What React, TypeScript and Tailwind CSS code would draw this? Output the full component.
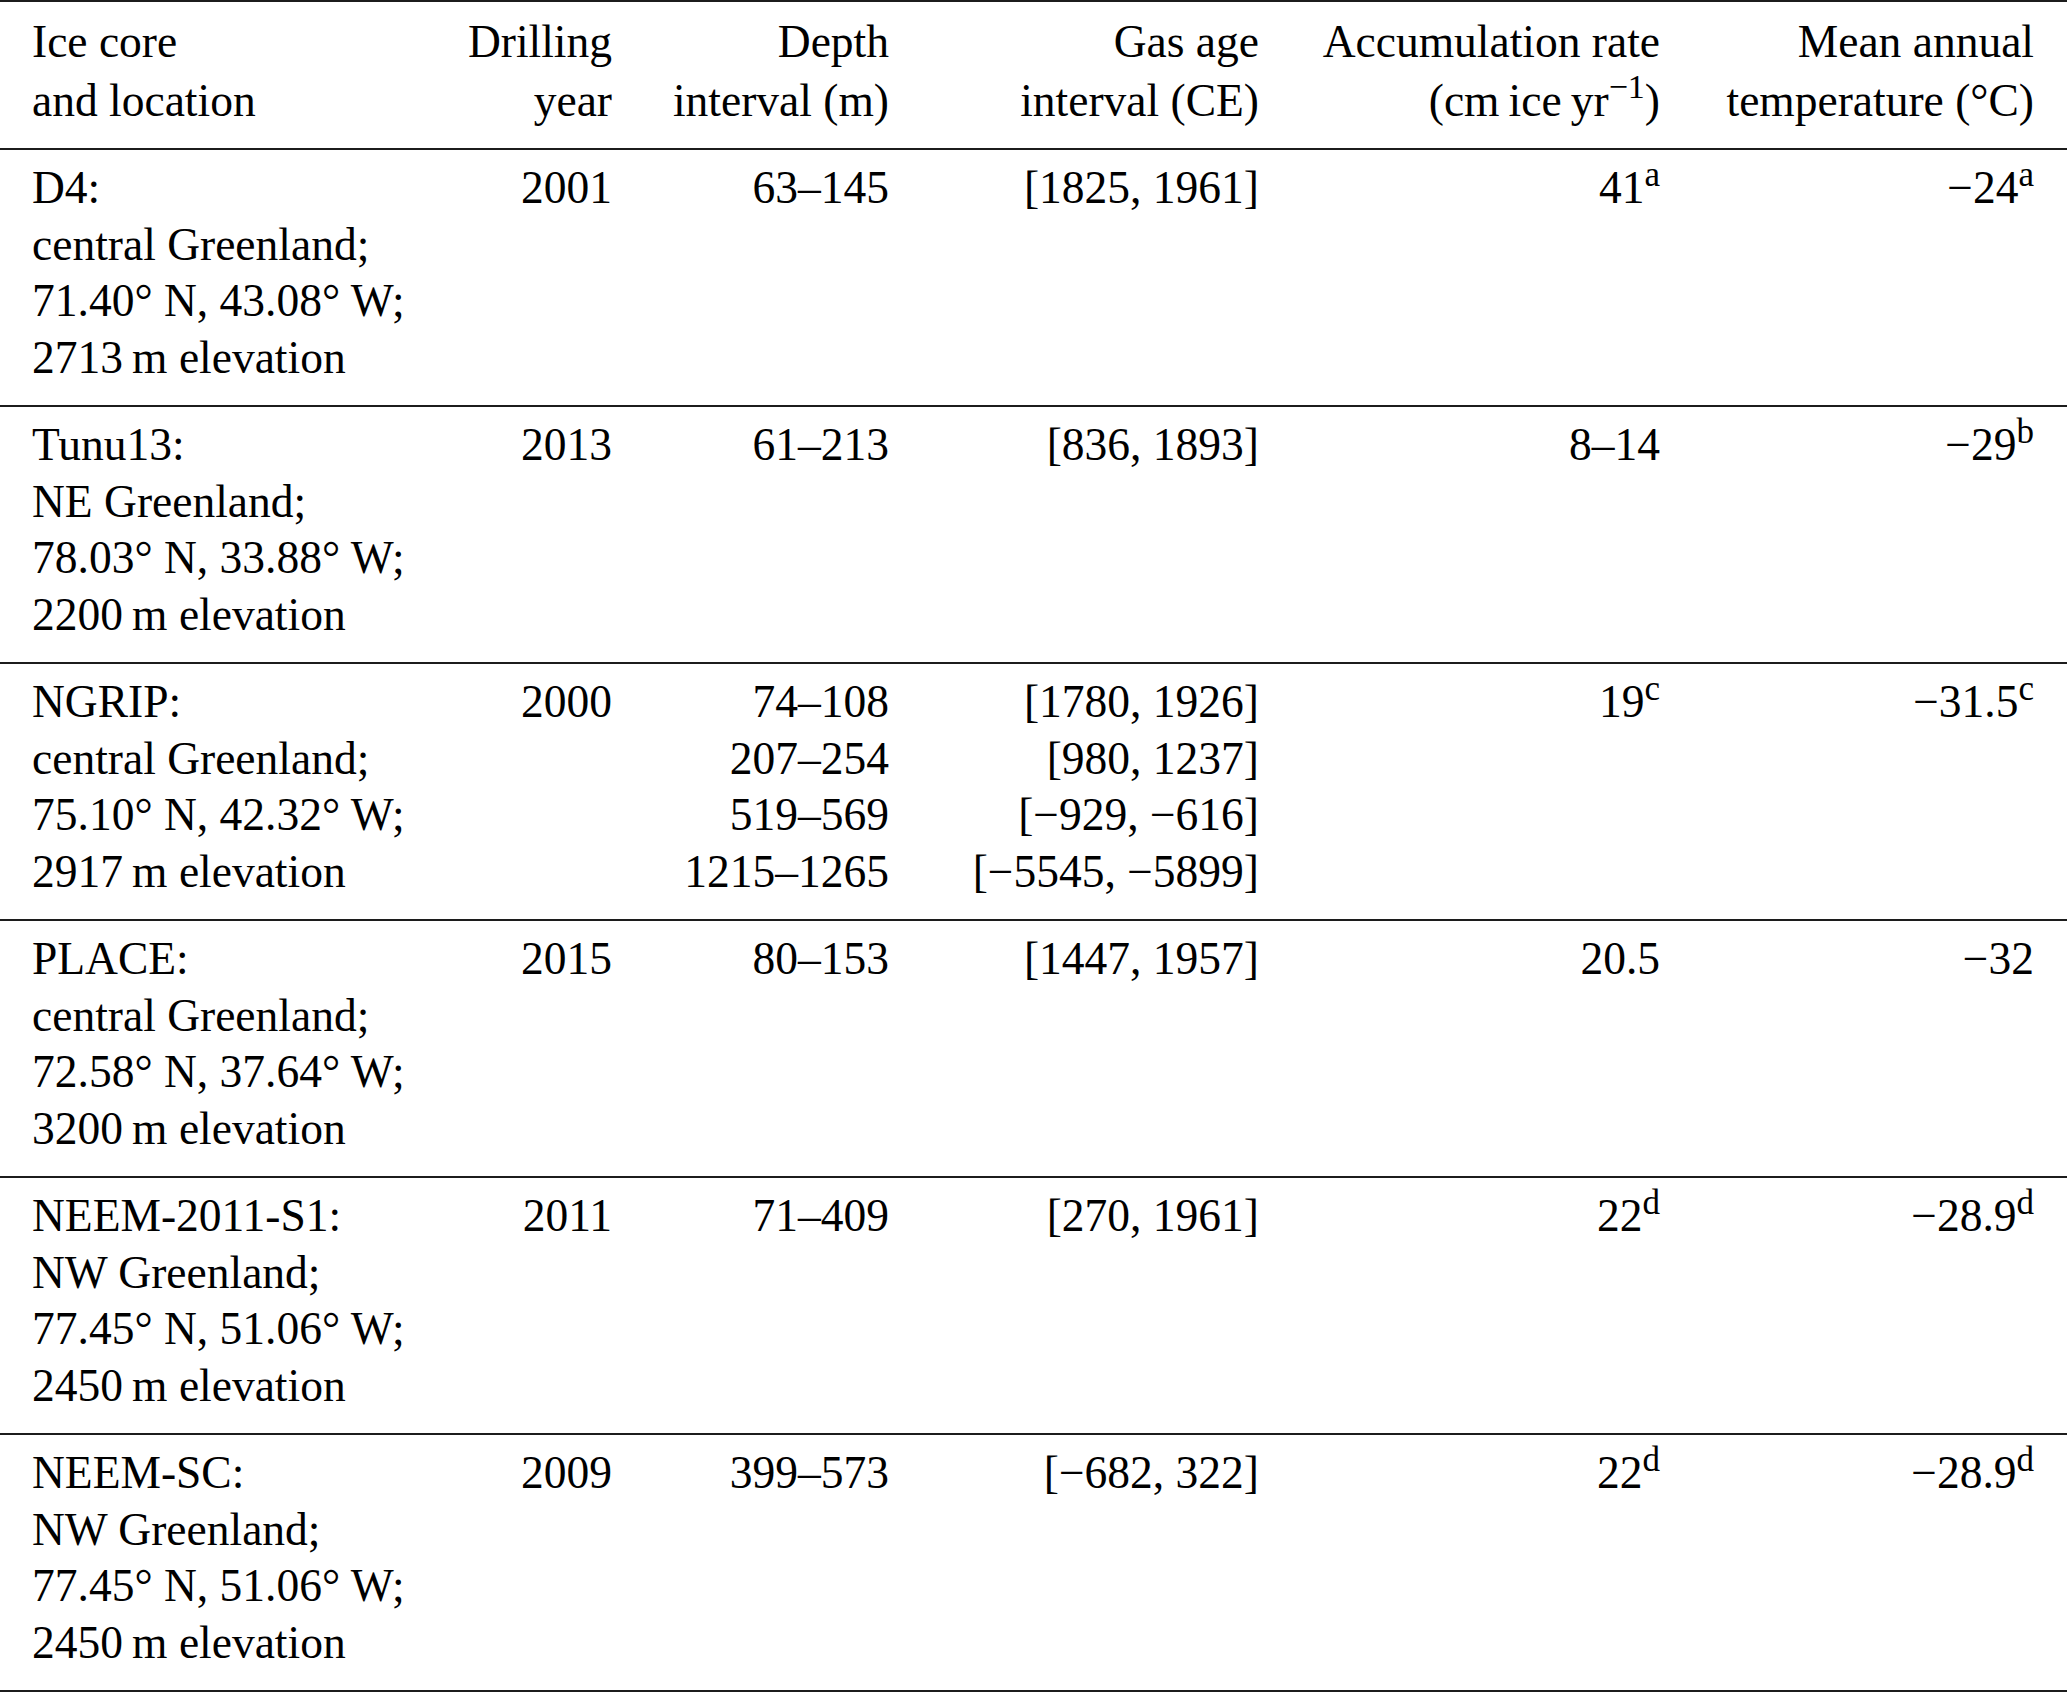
import React from "react";

type Cell = React.ReactNode;

const Sup = ({ children }: { children: React.ReactNode }) => (
  <sup className="text-[35px] top-[-17px]">{children}</sup>
);

const M = "\u2212";
const TS = "\u2009";

const rows: { loc: string[]; year: string; depth: string[]; age: string[]; acc: Cell; temp: Cell }[] = [
  {
    loc: ["D4:", "central Greenland;", "71.40° N, 43.08° W;", `2713${TS}m elevation`],
    year: "2001",
    depth: ["63–145"],
    age: ["[1825, 1961]"],
    acc: (
      <>
        41<Sup>a</Sup>
      </>
    ),
    temp: (
      <>
        {M}24<Sup>a</Sup>
      </>
    ),
  },
  {
    loc: ["Tunu13:", "NE Greenland;", "78.03° N, 33.88° W;", `2200${TS}m elevation`],
    year: "2013",
    depth: ["61–213"],
    age: ["[836, 1893]"],
    acc: <>8–14</>,
    temp: (
      <>
        {M}29<Sup>b</Sup>
      </>
    ),
  },
  {
    loc: ["NGRIP:", "central Greenland;", "75.10° N, 42.32° W;", `2917${TS}m elevation`],
    year: "2000",
    depth: ["74–108", "207–254", "519–569", "1215–1265"],
    age: ["[1780, 1926]", "[980, 1237]", `[${M}929, ${M}616]`, `[${M}5545, ${M}5899]`],
    acc: (
      <>
        19<Sup>c</Sup>
      </>
    ),
    temp: (
      <>
        {M}31.5<Sup>c</Sup>
      </>
    ),
  },
  {
    loc: ["PLACE:", "central Greenland;", "72.58° N, 37.64° W;", `3200${TS}m elevation`],
    year: "2015",
    depth: ["80–153"],
    age: ["[1447, 1957]"],
    acc: <>20.5</>,
    temp: <>{M}32</>,
  },
  {
    loc: ["NEEM-2011-S1:", "NW Greenland;", "77.45° N, 51.06° W;", `2450${TS}m elevation`],
    year: "2011",
    depth: ["71–409"],
    age: ["[270, 1961]"],
    acc: (
      <>
        22<Sup>d</Sup>
      </>
    ),
    temp: (
      <>
        {M}28.9<Sup>d</Sup>
      </>
    ),
  },
  {
    loc: ["NEEM-SC:", "NW Greenland;", "77.45° N, 51.06° W;", `2450${TS}m elevation`],
    year: "2009",
    depth: ["399–573"],
    age: [`[${M}682, 322]`],
    acc: (
      <>
        22<Sup>d</Sup>
      </>
    ),
    temp: (
      <>
        {M}28.9<Sup>d</Sup>
      </>
    ),
  },
];

const grid =
  "grid grid-cols-[440px_172px_277px_370px_401px_407px] border-t-2 border-[#1c1c1c]";

export default function App() {
  return (
    <div
      className="w-[2067px] h-[1692px] bg-white text-black text-[45.5px]"
      style={{ fontFamily: '"Liberation Serif", "Times New Roman", serif' }}
    >
      <div className="border-b-2 border-[#1c1c1c]">
        {/* header */}
        <div className={`${grid} leading-[59px] pt-[10px] pb-[18px] h-[148px]`}>
          <div className="pl-[32px] text-left">
            <div>Ice core</div>
            <div>and location</div>
          </div>
          <div className="text-right">
            <div>Drilling</div>
            <div>year</div>
          </div>
          <div className="text-right">
            <div>Depth</div>
            <div>interval (m)</div>
          </div>
          <div className="text-right">
            <div>Gas age</div>
            <div>interval (CE)</div>
          </div>
          <div className="text-right">
            <div>Accumulation rate</div>
            <div>
              (cm{TS}ice{TS}yr
              <sup className="text-[34px] top-[-18px]">{M}1</sup>)
            </div>
          </div>
          <div className="text-right pr-[33px]">
            <div>Mean annual</div>
            <div>temperature (°C)</div>
          </div>
        </div>
        {rows.map((r, i) => (
          <div key={i} className={`${grid} leading-[56.5px] pt-[10px] h-[257px]`}>
            <div className="pl-[32px] text-left">
              {r.loc.map((l, j) => (
                <div key={j} className="whitespace-nowrap">
                  {l}
                </div>
              ))}
            </div>
            <div className="text-right">{r.year}</div>
            <div className="text-right">
              {r.depth.map((d, j) => (
                <div key={j}>{d}</div>
              ))}
            </div>
            <div className="text-right">
              {r.age.map((d, j) => (
                <div key={j} className="whitespace-nowrap">
                  {d}
                </div>
              ))}
            </div>
            <div className="text-right">{r.acc}</div>
            <div className="text-right pr-[33px]">{r.temp}</div>
          </div>
        ))}
      </div>
    </div>
  );
}
